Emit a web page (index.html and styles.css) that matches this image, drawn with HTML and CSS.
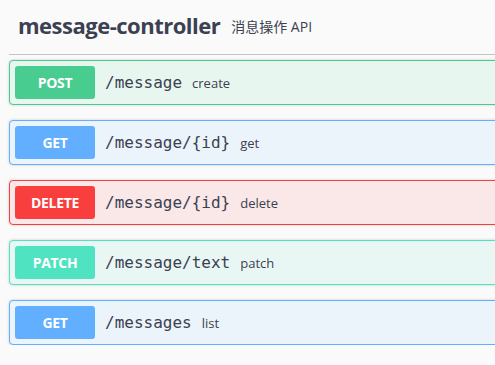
FILE: index.html
```html
<!DOCTYPE html>
<html lang="en">
  <head>
    <meta charset="UTF-8" />
    <meta name="viewport" content="width=device-width, initial-scale=1.0" />
    <title>message-controller</title>
    <link rel="stylesheet" href="styles.css">
  </head>
  <body>
    <div class="tag-section">
      <h4 class="tag">
        <span class="tag-name">message-controller</span>
        <small class="tag-desc">消息操作 API</small>
      </h4>
      <div class="ops">
        <div class="op op-post">
          <span class="method">POST</span>
          <span class="path">/message</span>
          <span class="summary">create</span>
        </div>
        <div class="op op-get">
          <span class="method">GET</span>
          <span class="path">/message/{id}</span>
          <span class="summary">get</span>
        </div>
        <div class="op op-delete">
          <span class="method">DELETE</span>
          <span class="path">/message/{id}</span>
          <span class="summary">delete</span>
        </div>
        <div class="op op-patch">
          <span class="method">PATCH</span>
          <span class="path">/message/text</span>
          <span class="summary">patch</span>
        </div>
        <div class="op op-get">
          <span class="method">GET</span>
          <span class="path">/messages</span>
          <span class="summary">list</span>
        </div>
      </div>
    </div>
  </body>
</html>
```

FILE: styles.css
```css
body {
  margin: 0;
  background: #fafafa;
  color: #3b4151;
  font-family: 'Open Sans', 'Noto Sans CJK SC', sans-serif;
  overflow: hidden;
}

.tag-section {
  width: 600px;
  padding-left: 9px;
}

.tag {
  display: flex;
  align-items: center;
  margin: 0;
  padding: 10px 0 14px 9px;
  border-bottom: 1px solid #c4c5cb;
}
.tag-name {
  font-size: 22px;
  font-weight: 700;
  letter-spacing: -0.5px;
}
.tag-desc {
  font-size: 14px;
  font-weight: 400;
  margin-left: 11px;
  padding-top: 1px;
}

.ops {
  display: flex;
  flex-direction: column;
  gap: 15px;
  padding-top: 5px;
}

/* one operation row */
.op {
  display: flex;
  align-items: center;
  height: 43px;
  padding: 0 5px;
  border: 1px solid;
  border-radius: 4px;
  box-shadow: 0 0 3px rgba(0, 0, 0, 0.19);
}
.method {
  width: 80px;
  height: 33px;
  line-height: 33px;
  text-align: center;
  border-radius: 3px;
  color: #fff;
  font-size: 14px;
  font-weight: 700;
  letter-spacing: -0.3px;
}
.path {
  margin-left: 10px;
  font-family: 'DejaVu Sans Mono', monospace;
  font-size: 16px;
}
.summary {
  margin-left: 10px;
  font-size: 13px;
}

.op-post { border-color: #49cc90; background: #e8f6f0; }
.op-post .method { background: #49cc90; }
.op-get { border-color: #61affe; background: #ebf3fb; }
.op-get .method { background: #61affe; }
.op-delete { border-color: #f93e3e; background: #fae7e7; }
.op-delete .method { background: #f93e3e; }
.op-patch { border-color: #50e3c2; background: #e9f7f4; }
.op-patch .method { background: #50e3c2; }
```
